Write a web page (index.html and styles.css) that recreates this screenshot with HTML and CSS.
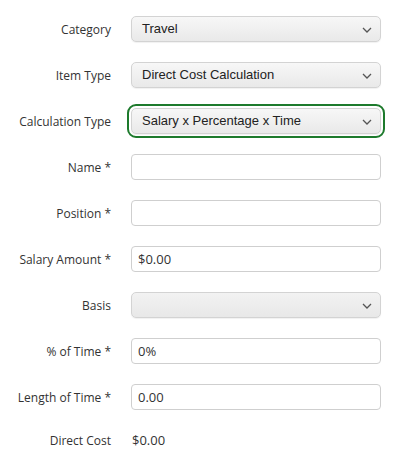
FILE: index.html
```html
<!DOCTYPE html>
<html>
<head>
<meta charset="utf-8">
<link rel="stylesheet" href="styles.css">
</head>
<body>
<form class="form">
  <div class="row">
    <label class="label">Category</label>
    <div class="select-wrap">
      <div class="select">Travel</div>
      <svg class="chev" width="10" height="6" viewBox="0 0 10 6"><path d="M1 1 L5 5 L9 1" fill="none" stroke="#555" stroke-width="1.3"/></svg>
    </div>
  </div>
  <div class="row">
    <label class="label">Item Type</label>
    <div class="select-wrap">
      <div class="select">Direct Cost Calculation</div>
      <svg class="chev" width="10" height="6" viewBox="0 0 10 6"><path d="M1 1 L5 5 L9 1" fill="none" stroke="#555" stroke-width="1.3"/></svg>
    </div>
  </div>
  <div class="row">
    <label class="label">Calculation Type</label>
    <div class="select-wrap focused">
      <div class="select">Salary x Percentage x Time</div>
      <svg class="chev" width="10" height="6" viewBox="0 0 10 6"><path d="M1 1 L5 5 L9 1" fill="none" stroke="#555" stroke-width="1.3"/></svg>
    </div>
  </div>
  <div class="row">
    <label class="label">Name *</label>
    <div class="input"></div>
  </div>
  <div class="row">
    <label class="label">Position *</label>
    <div class="input"></div>
  </div>
  <div class="row">
    <label class="label">Salary Amount *</label>
    <div class="input">$0.00</div>
  </div>
  <div class="row">
    <label class="label">Basis</label>
    <div class="select-wrap">
      <div class="select flat"></div>
      <svg class="chev" width="10" height="6" viewBox="0 0 10 6"><path d="M1 1 L5 5 L9 1" fill="none" stroke="#555" stroke-width="1.3"/></svg>
    </div>
  </div>
  <div class="row">
    <label class="label">% of Time *</label>
    <div class="input">0%</div>
  </div>
  <div class="row">
    <label class="label">Length of Time *</label>
    <div class="input">0.00</div>
  </div>
  <div class="row row-static">
    <label class="label">Direct Cost</label>
    <div class="static">$0.00</div>
  </div>
</form>
</body>
</html>
```

FILE: styles.css
```css
html, body {
  margin: 0;
  padding: 0;
  background: #fff;
}
body {
  font-family: "Open Sans", "Liberation Sans", sans-serif;
  color: #333;
}
.form {
  display: flex;
  flex-direction: column;
  gap: 20px;
  padding-top: 16px;
}
.row {
  display: grid;
  grid-template-columns: 111px 250px;
  column-gap: 20px;
  align-items: center;
  height: 26px;
}
.row-static {
  height: 20px;
}
.label {
  text-align: right;
  font-size: 12px;
  color: #333;
  white-space: nowrap;
}
.select-wrap {
  position: relative;
  height: 26px;
  border-radius: 5px;
}
.select-wrap.focused {
  outline: 2px solid #1d7a2c;
  outline-offset: 2px;
  border-radius: 5px;
}
.select {
  box-sizing: border-box;
  height: 26px;
  border: 1px solid #d3d3d3;
  border-radius: 5px;
  background: linear-gradient(#f7f7f7, #e9e9e9);
  box-shadow: 0 1px 1px rgba(0,0,0,0.06);
  font-family: "Liberation Sans", Arial, sans-serif;
  font-size: 13px;
  color: #222;
  line-height: 24px;
  padding-left: 10px;
}
.select.flat {
  background: linear-gradient(#f2f2f2, #e8e8e8);
}
.chev {
  position: absolute;
  right: 9px;
  top: 11px;
}
.input {
  box-sizing: border-box;
  height: 26px;
  border: 1px solid #cfcfcf;
  border-radius: 4px;
  background: #fff;
  font-size: 13px;
  line-height: 24px;
  padding-left: 6px;
  color: #333;
}
.static {
  font-size: 13px;
  color: #333;
  padding-left: 1px;
}
```
